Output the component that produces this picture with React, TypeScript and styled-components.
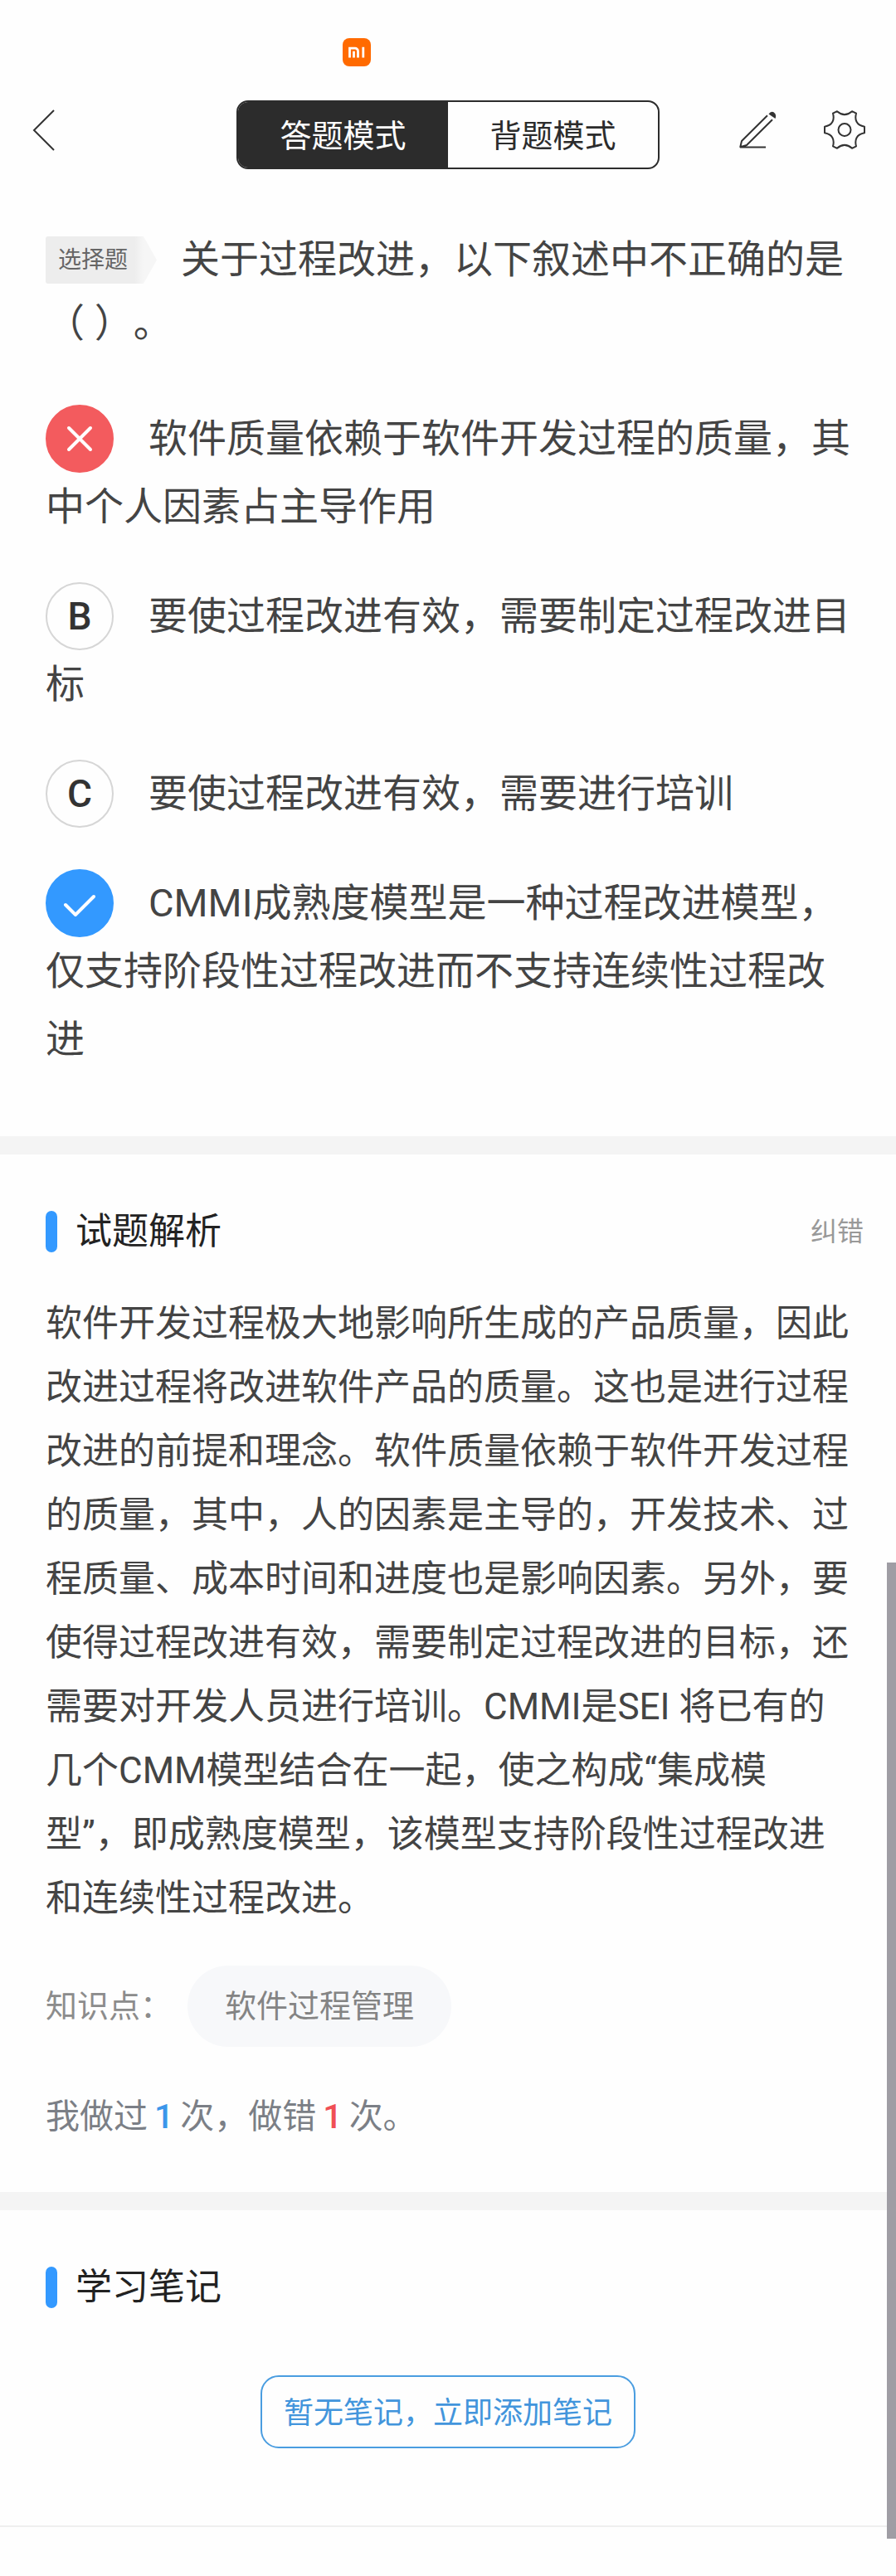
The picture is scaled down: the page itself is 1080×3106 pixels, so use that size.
import React, { useState } from "react";
import styled, { createGlobalStyle } from "styled-components";

const GlobalStyle = createGlobalStyle`
  * { box-sizing: border-box; }
  body {
    margin: 0;
    background: #fefefe;
    color: #444;
    font-family: Roboto, "Noto Sans CJK SC", sans-serif;
    text-spacing-trim: space-all;
  }
  button {
    margin: 0;
    padding: 0;
    border: 0;
    background: none;
    color: inherit;
    font: inherit;
    cursor: pointer;
  }
`;

const Page = styled.div`
  position: relative;
  padding-bottom: 58px;
`;

const StatusBar = styled.div`
  display: flex;
  height: 121px;
  padding: 46px 0 0 413px;
`;

const NavBar = styled.header`
  display: grid;
  grid-template-columns: 1fr auto 1fr;
  align-items: start;
  height: 83px;
  padding: 0 37px;
`;

const NavActions = styled.div`
  display: flex;
  justify-content: flex-end;
  gap: 57px;
`;

const IconButton = styled.button`
  display: flex;
  align-items: center;
  justify-self: start;
  height: 72px;
`;

const ModeSwitch = styled.div`
  display: flex;
  height: 83px;
  border: 2px solid #2c2c2c;
  border-radius: 14px;
  overflow: hidden;
`;

const ModeButton = styled.button<{ $active: boolean }>`
  width: 253px;
  padding-bottom: 4px;
  font-size: 38px;
  color: ${(p) => (p.$active ? "#fff" : "#2c2c2c")};
  background: ${(p) => (p.$active ? "#2c2c2c" : "transparent")};
`;

const Question = styled.section`
  padding: 70px 55px 76px;
`;

const Stem = styled.h1`
  margin: 0 0 60px;
  font-size: 47px;
  font-weight: 400;
  line-height: 77px;
`;

const TypeTag = styled.span`
  display: inline-block;
  height: 57px;
  width: 134px;
  margin: 11px 29px 0 0;
  padding-left: 15px;
  border-radius: 3px;
  font-size: 28px;
  line-height: 57px;
  vertical-align: top;
  color: #666;
  background: linear-gradient(90deg, #ededed 80%, #f6f6f6 88%);
  clip-path: polygon(0 0, 88% 0, 100% 50%, 88% 100%, 0 100%);
`;

const Options = styled.div`
  display: flex;
  flex-direction: column;
  gap: 50px;
`;

const Option = styled.button`
  display: block;
  width: 100%;
  font-size: 47px;
  line-height: 82px;
  text-align: left;
`;

const badgeColors = {
  plain: { fill: "#fefefe", line: "#d6d6d6" },
  wrong: { fill: "#f35b5e", line: "#f35b5e" },
  right: { fill: "#3399ff", line: "#3399ff" },
};

type BadgeState = keyof typeof badgeColors;

const Badge = styled.span<{ $state: BadgeState }>`
  display: inline-flex;
  align-items: center;
  justify-content: center;
  width: 82px;
  height: 82px;
  margin-right: 42px;
  border: 2px solid ${(p) => badgeColors[p.$state].line};
  border-radius: 50%;
  background: ${(p) => badgeColors[p.$state].fill};
  color: #333;
  font-size: 46px;
  font-weight: 500;
  line-height: 78px;
  vertical-align: top;
`;

const Divider = styled.div`
  height: 22px;
  background: #f4f4f4;
`;

const Section = styled.section`
  padding: 62px 55px 0;
`;

const SectionHead = styled.div`
  display: flex;
  align-items: center;
  justify-content: space-between;
  height: 62px;
  margin-right: -16px;
`;

const SectionTitle = styled.h2`
  display: flex;
  align-items: center;
  gap: 22px;
  margin: 0;
  font-size: 44px;
  font-weight: 400;
  line-height: 50px;
  color: #222;

  &::before {
    content: "";
    width: 14px;
    height: 50px;
    border-radius: 7px;
    background: #3399ff;
  }
`;

const ReportButton = styled.button`
  padding-bottom: 6px;
  font-size: 32px;
  color: #999;
`;

const Analysis = styled.p`
  margin: 42px 0;
  font-size: 44px;
  line-height: 77px;
`;

const KnowledgeRow = styled.div`
  display: flex;
  align-items: center;
  gap: 19px;
  font-size: 38px;
  line-height: 56px;
  color: #8c8c8c;
`;

const KnowledgeChip = styled.button`
  height: 98px;
  padding: 0 45px;
  border-radius: 49px;
  background: #f7f8fa;
  color: #848484;
`;

const Stats = styled.p`
  margin: 54px 0 61px;
  font-size: 41px;
  line-height: 60px;
  color: #7b7f86;
`;

const Count = styled.span<{ $wrong?: boolean }>`
  margin: 0 8px;
  font-weight: 500;
  color: ${(p) => (p.$wrong ? "#f04f55" : "#3c96ea")};
`;

const NotesBody = styled.div`
  display: flex;
  justify-content: center;
  padding: 75px 0 93px;
`;

const AddNote = styled.button`
  height: 88px;
  padding: 0 26px 4px;
  border: 2px solid #4a9de0;
  border-radius: 22px;
  font-size: 36px;
  color: #4295dc;
`;

const BottomRule = styled.div`
  height: 2px;
  background: #efefef;
`;

const ScrollThumb = styled.div`
  position: absolute;
  top: 1884px;
  right: 0;
  bottom: 44px;
  width: 11px;
  background: #9f9da4;
`;

const MiLogo = () => (
  <svg width="34" height="34" viewBox="0 0 34 34" aria-hidden="true">
    <rect width="34" height="34" rx="8" fill="#ff6a00" />
    <path d="M8.500 23.500V12.200h6.500a3.500 3.500 0 0 1 3.500 3.500v7.800" fill="none" stroke="#fff" strokeWidth="2.800" />
    <path d="M13.500 15.800v7.700M24.800 10.800v12.700" fill="none" stroke="#fff" strokeWidth="2.800" />
  </svg>
);

const BackIcon = () => (
  <svg width="32" height="52" viewBox="0 0 32 52" fill="none" stroke="#333" strokeWidth="2">
    <path d="M28 2 4 26l24 24" />
  </svg>
);

const PencilIcon = () => (
  <svg width="46" height="48" viewBox="0 0 46 48" fill="none" stroke="#333" strokeWidth="2" strokeLinejoin="round">
    <path d="M35 6.300 4 37 2.300 44.300 10 42 41 11.300M2 44.500h31" />
    <path d="M36.500 4.500Q39 .8 42.500 2.200 46.500 4.500 44.500 10Z" fill="#333" stroke="none" />
  </svg>
);

const GearIcon = () => (
  <svg width="50" height="48" viewBox="0 0 50 48" fill="none" stroke="#333" strokeWidth="2" strokeLinejoin="round">
    <circle cx="25" cy="23.500" r="7.500" />
    <path d="M11 3.700 16 1.200Q25 9 34 1.200L39 3.700C37 11 39 18 49 19.700V27.300C39 29 37 36 39 43.300L34 45.800Q25 38 16 45.800L11 43.300C13 36 11 29 1 27.300V19.700C11 18 13 11 11 3.700Z" />
  </svg>
);

const CrossMark = () => (
  <svg width="32" height="32" viewBox="0 0 32 32" fill="none" stroke="#fff" strokeWidth="4" strokeLinecap="round">
    <path d="M3 3l26 26M29 3 3 29" />
  </svg>
);

const CheckMark = () => (
  <svg width="40" height="32" viewBox="0 0 40 32" fill="none" stroke="#fff" strokeWidth="4" strokeLinecap="round">
    <path d="M3 18l12 12L37 8" />
  </svg>
);

const options: { key: string; state: BadgeState; text: string }[] = [
  { key: "A", state: "wrong", text: "软件质量依赖于软件开发过程的质量，其中个人因素占主导作用" },
  { key: "B", state: "plain", text: "要使过程改进有效，需要制定过程改进目标" },
  { key: "C", state: "plain", text: "要使过程改进有效，需要进行培训" },
  { key: "D", state: "right", text: "CMMI成熟度模型是一种过程改进模型，仅支持阶段性过程改进而不支持连续性过程改进" },
];

const marks = { wrong: <CrossMark />, right: <CheckMark /> };

export default function App() {
  const [mode, setMode] = useState("答题模式");

  return (
    <Page lang="zh-CN">
      <GlobalStyle />
      <StatusBar>
        <MiLogo />
      </StatusBar>
      <NavBar>
        <IconButton aria-label="返回">
          <BackIcon />
        </IconButton>
        <ModeSwitch>
          {["答题模式", "背题模式"].map((name) => (
            <ModeButton key={name} $active={name === mode} onClick={() => setMode(name)}>
              {name}
            </ModeButton>
          ))}
        </ModeSwitch>
        <NavActions>
          <IconButton aria-label="草稿">
            <PencilIcon />
          </IconButton>
          <IconButton aria-label="设置">
            <GearIcon />
          </IconButton>
        </NavActions>
      </NavBar>

      <Question>
        <Stem>
          <TypeTag>选择题</TypeTag>
          关于过程改进，以下叙述中不正确的是（ ）。
        </Stem>
        <Options>
          {options.map(({ key, state, text }) => (
            <Option key={key}>
              <Badge $state={state}>{state === "plain" ? key : marks[state]}</Badge>
              {text}
            </Option>
          ))}
        </Options>
      </Question>

      <Divider />

      <Section>
        <SectionHead>
          <SectionTitle>试题解析</SectionTitle>
          <ReportButton>纠错</ReportButton>
        </SectionHead>
        <Analysis>
          软件开发过程极大地影响所生成的产品质量，因此改进过程将改进软件产品的质量。这也是进行过程改进的前提和理念。软件质量依赖于软件开发过程的质量，其中，人的因素是主导的，开发技术、过程质量、成本时间和进度也是影响因素。另外，要使得过程改进有效，需要制定过程改进的目标，还需要对开发人员进行培训。CMMI是SEI 将已有的几个CMM模型结合在一起，使之构成“集成模型”，即成熟度模型，该模型支持阶段性过程改进和连续性过程改进。
        </Analysis>
        <KnowledgeRow>
          <span>知识点：</span>
          <KnowledgeChip>软件过程管理</KnowledgeChip>
        </KnowledgeRow>
        <Stats>
          我做过<Count>1</Count>次，做错<Count $wrong>1</Count>次。
        </Stats>
      </Section>

      <Divider />

      <Section>
        <SectionHead>
          <SectionTitle>学习笔记</SectionTitle>
        </SectionHead>
        <NotesBody>
          <AddNote>暂无笔记，立即添加笔记</AddNote>
        </NotesBody>
      </Section>
      <BottomRule />
      <ScrollThumb />
    </Page>
  );
}
